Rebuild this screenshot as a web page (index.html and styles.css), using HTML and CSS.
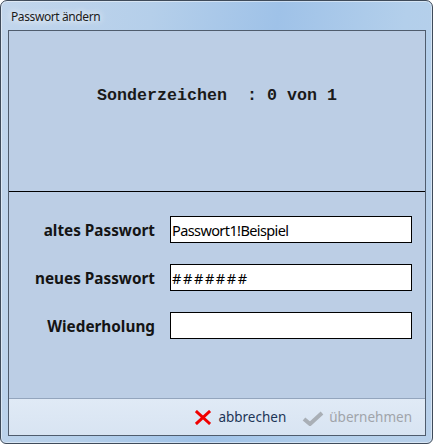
FILE: index.html
```html
<!DOCTYPE html>
<html lang="de">
<head>
<meta charset="utf-8">
<title>Passwort ändern</title>
<link rel="stylesheet" href="styles.css">
</head>
<body>
<div class="window">
  <div class="titlebar"><span class="title">Passwort ändern</span></div>
  <div class="client">
    <div class="info">
      <span class="info-text">Sonderzeichen  : 0 von 1</span>
    </div>
    <div class="form">
      <label class="label" for="old">altes Passwort</label>
      <input class="field" id="old" type="text" value="Passwort1!Beispiel">
      <label class="label" for="new">neues Passwort</label>
      <input class="field field-masked" id="new" type="text" value="#######">
      <label class="label" for="rep">Wiederholung</label>
      <input class="field" id="rep" type="text" value="">
    </div>
    <div class="footer">
      <button class="btn btn-cancel" type="button">
        <svg class="icon" width="16" height="15" viewBox="0 0 16 15"><path d="M2 2 L14 13 M14 2 L2 13" stroke="#f00000" stroke-width="3" fill="none" stroke-linecap="square"/></svg>
        <span>abbrechen</span>
      </button>
      <button class="btn btn-ok" type="button" disabled>
        <svg class="icon icon-check" width="22" height="15" viewBox="0 0 22 15"><path d="M2 8 L8 13 L20 2" stroke="#a9afb6" stroke-width="4" fill="none" stroke-linejoin="miter"/></svg>
        <span>übernehmen</span>
      </button>
    </div>
  </div>
</div>
</body>
</html>
```

FILE: styles.css
```css
* { box-sizing: border-box; }
html, body { margin: 0; padding: 0; background: #ffffff; }
body { width: 433px; height: 444px; overflow: hidden; }

.window {
  width: 433px;
  height: 444px;
  border: 1px solid #3f4b5a;
  border-radius: 7px 7px 6px 6px;
  background: linear-gradient(100deg, #c2d6ec 0%, #b5cfea 30%, #9fc2e8 55%, #b3cfeb 80%, #b8d0ea 100%);
  display: flex;
  flex-direction: column;
  padding: 0 6px 7px 7px;
  box-shadow: inset 0 0 0 1px rgba(255,255,255,0.45);
}

.titlebar {
  height: 29px;
  display: flex;
  align-items: center;
  padding-left: 3px;
  padding-top: 2px;
}
.title {
  font-family: "Noto Sans", "Open Sans", sans-serif;
  font-size: 12px;
  letter-spacing: -0.4px;
  color: #1b1b1b;
  text-shadow: 0 0 6px rgba(255,255,255,0.9), 0 0 10px rgba(255,255,255,0.8);
}

.client {
  flex: 1;
  border: 1px solid #4f5c6d;
  background: #bccee5;
  display: flex;
  flex-direction: column;
}

.info {
  height: 161px;
  border-bottom: 1px solid #000000;
  display: flex;
  align-items: center;
  justify-content: center;
  padding-bottom: 32px;
}
.info-text {
  font-family: "Liberation Mono", "Courier New", monospace;
  font-weight: bold;
  font-size: 16.67px;
  white-space: pre;
  color: #1a1a1a;
}

.form {
  flex: 1;
  display: grid;
  grid-template-columns: 146px 242px;
  grid-auto-rows: 27px;
  column-gap: 15px;
  row-gap: 21px;
  padding-top: 24px;
  align-content: start;
}
.label {
  font-family: "Noto Sans", "Open Sans", sans-serif;
  font-weight: bold;
  font-size: 15.3px;
  color: #141414;
  text-align: right;
  align-self: center;
  white-space: nowrap;
}
.field {
  width: 242px;
  height: 27px;
  border: 1px solid #000000;
  background: #ffffff;
  padding: 0 1px;
  font-family: "Noto Sans", "Open Sans", sans-serif;
  font-size: 14.5px;
  letter-spacing: -0.6px;
  color: #000000;
  outline: none;
  margin: 0;
}
.field-masked { letter-spacing: 1.6px; }

.footer {
  height: 37px;
  border-top: 1px solid #93a5bd;
  background: linear-gradient(180deg, #e0eaf6 0%, #d8e4f2 100%);
  display: flex;
  justify-content: flex-end;
  align-items: center;
  padding-right: 13px;
  gap: 16px;
}
.btn {
  display: flex;
  align-items: center;
  border: none;
  background: transparent;
  padding: 0;
  font-family: "Noto Sans", "Open Sans", sans-serif;
  font-size: 13.5px;
}
.btn-cancel { color: #1d3557; gap: 7px; }
.btn-ok { color: #a0a4aa; gap: 5px; }
.icon { display: block; }
.icon-check { margin-top: 2px; }
```
